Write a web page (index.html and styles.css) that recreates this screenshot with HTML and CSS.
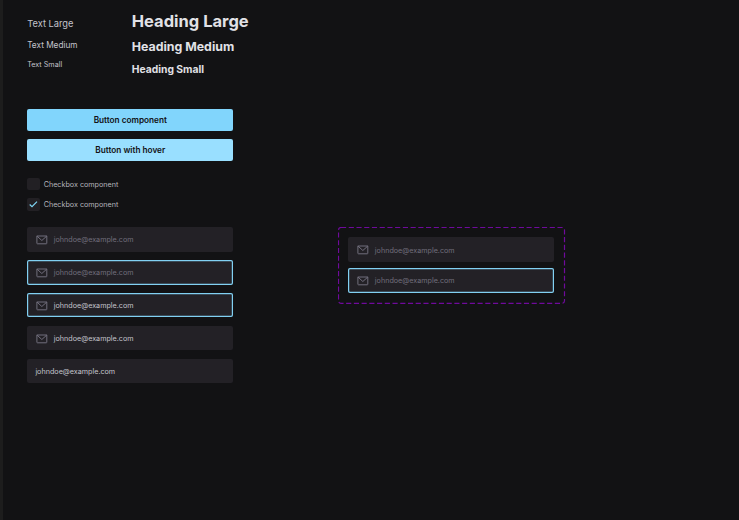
FILE: index.html
```
<!DOCTYPE html>
<html lang="en">
<head>
<meta charset="utf-8">
<title>Components</title>
<link rel="stylesheet" href="styles.css">
</head>
<body>
<svg class="defs" width="0" height="0"><symbol id="mail" viewBox="0 0 12 10"><path d="M.9 1h9.9v7.3q0 .5-.5.5H1.4q-.5 0-.5-.5zL5.85 5.5 10.8 1" fill="none" stroke="#716e7c" stroke-width="1" stroke-linejoin="round"/></symbol></svg>
<main class="canvas">
  <section class="library">
    <div class="type">
      <div class="texts">
        <p class="text-lg">Text Large</p>
        <p class="text-md">Text Medium</p>
        <p class="text-sm">Text Small</p>
      </div>
      <div class="headings">
        <h1>Heading Large</h1>
        <h2>Heading Medium</h2>
        <h3>Heading Small</h3>
      </div>
    </div>
    <div class="buttons">
      <button class="button">Button component</button>
      <button class="button hover">Button with hover</button>
    </div>
    <div class="checks">
      <div class="check"><span class="box"></span><span class="label">Checkbox component</span></div>
      <div class="check"><span class="box"><svg width="12" height="12" viewBox="0 0 12 12"><path d="M2.7 6.5 5 8.7 10 3.6" fill="none" stroke="#81d8f7" stroke-width="1.15"/></svg></span><span class="label">Checkbox component</span></div>
    </div>
    <div class="inputs">
      <div class="input"><svg class="icon"><use href="#mail"/></svg><span>johndoe@example.com</span></div>
      <div class="input focus"><svg class="icon"><use href="#mail"/></svg><span>johndoe@example.com</span></div>
      <div class="input focus filled"><svg class="icon"><use href="#mail"/></svg><span>johndoe@example.com</span></div>
      <div class="input filled"><svg class="icon"><use href="#mail"/></svg><span>johndoe@example.com</span></div>
      <div class="input filled plain"><span>johndoe@example.com</span></div>
    </div>
  </section>
  <section class="variants">
    <svg class="outline" width="228" height="78"><rect x=".5" y=".5" width="226" height="75.8" rx="2.5" fill="none" stroke="#6f0a9c" stroke-width="1.2" stroke-dasharray="5.15 2.58"/></svg>
    <div class="input"><svg class="icon"><use href="#mail"/></svg><span>johndoe@example.com</span></div>
    <div class="input focus"><svg class="icon"><use href="#mail"/></svg><span>johndoe@example.com</span></div>
  </section>
</main>
</body>
</html>
```
FILE: styles.css
```
* { box-sizing: border-box; margin: 0; }
body { background: #121214; font-family: Inter, sans-serif; color: #c4c4cc; overflow: hidden; }
.defs { display: block; }
.canvas { display: flex; height: 520px; border-left: 3px solid #1d1d1d; padding-left: 24.2px; }
.library { width: 206.2px; padding-top: 11px; }
.type { display: flex; height: 97.5px; white-space: nowrap; }
.texts { flex: none; width: 104.6px; padding-top: 5px; }
.text-lg { font-size: 9.27px; line-height: 16px; }
.text-md { font-size: 8.24px; line-height: 14px; margin-top: 5.5px; }
.text-sm { font-size: 7.2px; line-height: 12px; margin-top: 7px; }
.headings { color: #e1e1e6; }
h1 { font-size: 16.5px; line-height: 20px; }
h2 { font-size: 12.36px; line-height: 16px; margin-top: 8px; }
h3 { font-size: 10.3px; line-height: 14px; margin-top: 7px; }
.buttons { display: flex; flex-direction: column; gap: 8.2px; }
.button { height: 22.3px; border: 0; padding: 0; border-radius: 2px; background: #81d5fc; color: #121214; font: 600 8.24px Inter, sans-serif; }
.button.hover { background: #99dfff; }
.checks { display: flex; flex-direction: column; gap: 8.2px; margin-top: 16.4px; }
.check { display: flex; align-items: center; gap: 4.1px; height: 12.4px; font-size: 7.2px; }
.label { padding-top: 1px; color: #b4b4bb; }
.box { width: 12.4px; height: 12.4px; border-radius: 2px; background: #222024; }
.box svg { display: block; }
.inputs { display: flex; flex-direction: column; gap: 8.3px; margin-top: 16.2px; }
.input { display: flex; align-items: center; gap: 6px; width: 206.2px; height: 24.7px; padding: 1px 0 0 8.6px; border-radius: 2px; background: #232126; color: #716e7c; font-size: 7.2px; }
.input.focus { box-shadow: inset 0 0 0 1.2px #81d0f2; }
.input.filled { color: #c4c4cc; }
.input.plain { padding-left: 8.2px; }
.icon { width: 12px; height: 10px; }
.variants { position: relative; display: flex; flex-direction: column; gap: 6.2px; width: 228px; height: 78px; margin: 227px 0 0 104.4px; padding: 10.2px; }
.variants .input { padding-left: 8.9px; }
.outline { position: absolute; left: 0; top: 0; }
```
